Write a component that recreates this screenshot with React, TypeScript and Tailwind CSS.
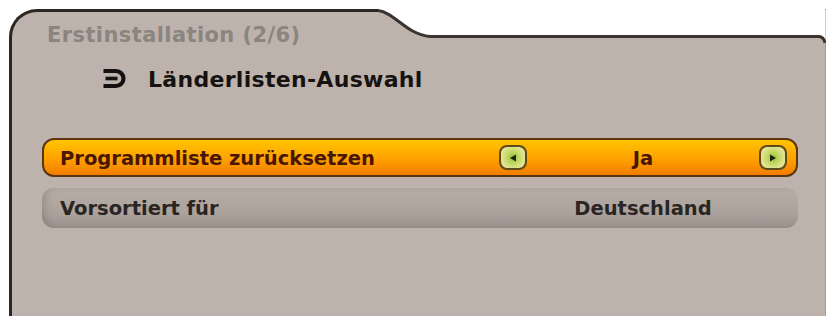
import type { ReactNode } from "react";

const font = { fontFamily: '"DejaVu Sans", "Liberation Sans", sans-serif' };

function ReturnIcon() {
  return (
    <svg width="25" height="21" viewBox="0 0 25 21" aria-hidden="true">
      <path
        d="M1.5 3 H14 A7.5 7.5 0 0 1 14 18 H1.5"
        fill="none"
        stroke="#141110"
        strokeWidth="4.2"
      />
      <path d="M3.5 10.5 H15.5" stroke="#141110" strokeWidth="3.6" />
    </svg>
  );
}

function ArrowKey({ dir }: { dir: "left" | "right" }) {
  return (
    <span className="grid h-[25px] w-[28px] place-items-center rounded-[8px] border-2 border-[#5e4a1a] bg-[radial-gradient(circle,#97bf3a_0%,#c4da64_40%,#e4e598_75%,#c9b94e_100%)]">
      <svg width="8" height="8" viewBox="0 0 8 8" aria-hidden="true">
        {dir === "left" ? (
          <path d="M1 4 L7 0.5 L7 7.5 Z" fill="#1c2410" />
        ) : (
          <path d="M7 4 L1 0.5 L1 7.5 Z" fill="#1c2410" />
        )}
      </svg>
    </span>
  );
}

function Row({
  label,
  value,
  active,
}: {
  label: string;
  value: ReactNode;
  active?: boolean;
}) {
  return (
    <div
      className={[
        "flex items-center rounded-[12px] text-[19.5px] font-bold",
        active
          ? "h-[39px] border-2 border-[#5a3510] bg-[linear-gradient(180deg,#ffc400_0%,#ffa400_50%,#f27d00_100%)] pl-[16px] pr-[9px] text-[#4a1600]"
          : "mt-[11px] h-[40px] bg-[linear-gradient(180deg,#b6ada7_0%,#aca39d_60%,#9b928d_100%)] pl-[18px] pr-[11px] text-[#2a2522] shadow-[inset_6px_0_8px_-4px_rgba(90,80,75,0.35)]",
      ].join(" ")}
    >
      <span className="flex-1 pt-[2px]">{label}</span>
      {active ? <ArrowKey dir="left" /> : <span className="w-[28px]" />}
      <span className="w-[232px] pt-[2px] text-center">{value}</span>
      {active ? <ArrowKey dir="right" /> : <span className="w-[28px]" />}
    </div>
  );
}

export default function App() {
  return (
    <div
      className="h-[321px] w-[834px] overflow-hidden bg-white pb-[5px] pl-[9px] pr-[8px] pt-[9px]"
      style={font}
    >
      <div className="relative h-full rounded-tl-[28px] border-l-[3px] border-r border-t-[3px] border-l-[#2b2623] border-r-[#a59d98] border-t-[#2b2623] bg-[#bdb3ac]">
        <svg
          className="absolute right-[-1px] top-[-3px]"
          width="448"
          height="40"
          viewBox="0 0 448 40"
          aria-hidden="true"
        >
          <path
            d="M0 -2 L0 1.5 C17 3 27 25 52 27.5 L441 27.5 Q446.5 28 447.5 34 L447.5 -2 Z"
            fill="#ffffff"
          />
          <path
            d="M-1 1.5 C17 3 27 25 52 27.5 L441 27.5 Q446 28 447 34"
            fill="none"
            stroke="#3a3431"
            strokeWidth="3"
          />
        </svg>

        <div className="pl-[30px] pr-[27px] pt-[11px]">
          <div className="pl-[5px] text-[21px] font-bold leading-[24px] tracking-[0.4px] text-[#8b8580]">
            Erstinstallation (2/6)
          </div>
          <div className="mt-[20px] flex items-center gap-[21px] pl-[60px] text-[22px] font-bold leading-[26px] tracking-[0.3px] text-[#161210]">
            <span className="-mt-[3px] flex">
              <ReturnIcon />
            </span>
            <span>Länderlisten-Auswahl</span>
          </div>

          <div className="mt-[45px]">
            <Row label="Programmliste zurücksetzen" value="Ja" active />
            <Row label="Vorsortiert für" value="Deutschland" />
          </div>
        </div>
      </div>
    </div>
  );
}
